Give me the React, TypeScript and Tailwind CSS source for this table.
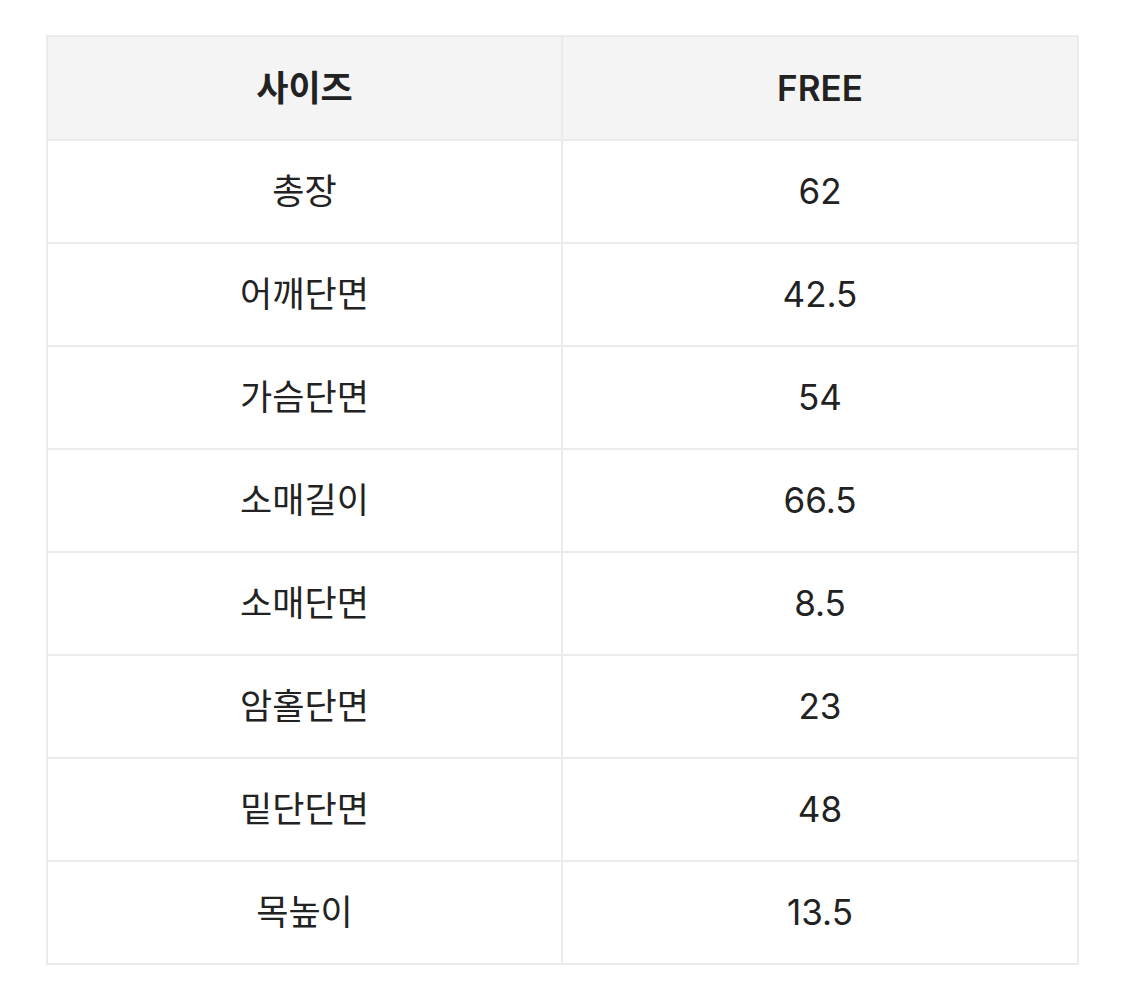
const rows: [string, string][] = [
  ["총장", "62"],
  ["어깨단면", "42.5"],
  ["가슴단면", "54"],
  ["소매길이", "66.5"],
  ["소매단면", "8.5"],
  ["암홀단면", "23"],
  ["밑단단면", "48"],
  ["목높이", "13.5"],
];

export default function App() {
  return (
    <div
      className="min-h-[1007px] w-[1125px] bg-white pl-[46px] pt-[35px] text-[#222]"
      style={{ fontFamily: "Inter, 'Noto Sans CJK KR', sans-serif" }}
    >
      <table className="w-[1033px] table-fixed border-collapse text-center text-[35px]">
        <thead>
          <tr className="h-[104px] bg-[#f4f4f4]">
            <th className="w-[515px] border-2 border-[#ebebeb] font-semibold">사이즈</th>
            <th className="border-2 border-[#ebebeb] font-semibold">FREE</th>
          </tr>
        </thead>
        <tbody>
          {rows.map(([label, value]) => (
            <tr key={label} className="h-[103px]">
              <td className="border-2 border-[#ebebeb]">{label}</td>
              <td className="border-2 border-[#ebebeb]">{value}</td>
            </tr>
          ))}
        </tbody>
      </table>
    </div>
  );
}
